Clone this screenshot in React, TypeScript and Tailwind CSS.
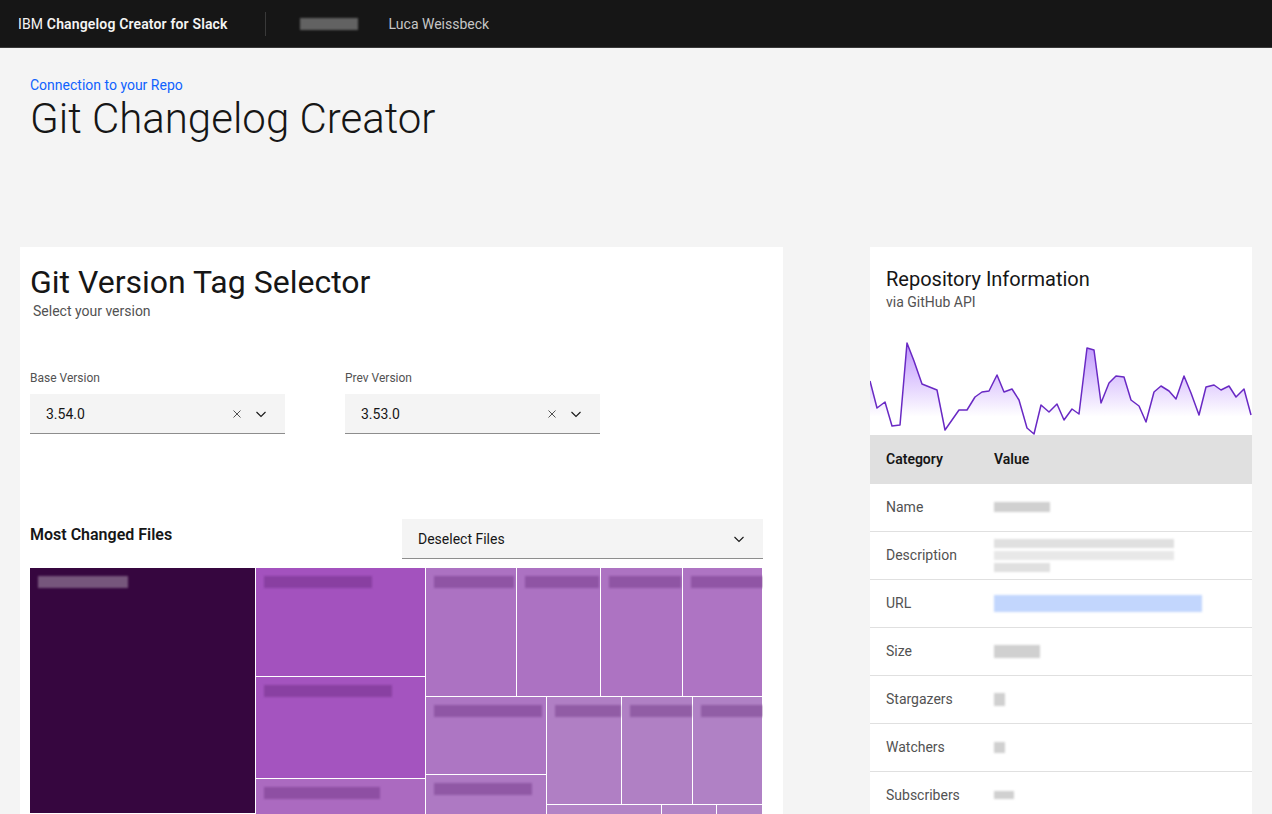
import React from "react";

const FONT = { fontFamily: "Roboto, 'Noto Sans', 'Liberation Sans', sans-serif" } as React.CSSProperties;

const pts: [number, number][] = [
  [870, 381], [877, 408], [885, 402], [892, 426], [900, 425], [907, 343], [914, 361], [922, 384], [937, 390], [945, 430],
  [959, 410], [967, 410], [975, 397], [982, 392], [989, 391], [997, 375], [1004, 392], [1012, 389], [1019, 400], [1027, 428],
  [1034, 434], [1041, 405], [1049, 412], [1057, 404], [1064, 420], [1072, 409], [1079, 414], [1087, 348], [1094, 350], [1101, 403],
  [1109, 383], [1116, 376], [1124, 377], [1131, 400], [1139, 406], [1146, 422], [1154, 392], [1161, 386], [1169, 391], [1176, 399],
  [1184, 376], [1191, 393], [1199, 415], [1206, 387], [1214, 385], [1221, 390], [1229, 386], [1236, 397], [1244, 389], [1251, 415],
];

function Sparkline() {
  const p = pts.map(([x, y]) => [x - 870, y - 335]);
  const line = p.map(([x, y], i) => `${i ? "L" : "M"}${x},${y}`).join(" ");
  const area = `${line} L381,100 L0,100 Z`;
  return (
    <svg width="382" height="100" viewBox="0 0 382 100" className="block">
      <defs>
        <linearGradient id="g" x1="0" y1="0" x2="0" y2="1">
          <stop offset="0" stopColor="#8a3ffc" stopOpacity="0.55" />
          <stop offset="0.8" stopColor="#8a3ffc" stopOpacity="0" />
        </linearGradient>
      </defs>
      <path d={area} fill="url(#g)" />
      <path d={line} fill="none" stroke="#6929c4" strokeWidth="1.5" strokeLinejoin="round" />
    </svg>
  );
}

function XIcon() {
  return (
    <svg width="16" height="16" viewBox="0 0 16 16" fill="none" stroke="#525252" strokeWidth="1">
      <path d="M4.5 4.5 L11.5 11.5 M11.5 4.5 L4.5 11.5" />
    </svg>
  );
}
function Chevron() {
  return (
    <svg width="16" height="16" viewBox="0 0 16 16" fill="none" stroke="#161616" strokeWidth="1.1">
      <path d="M3.5 6 L8 10.5 L12.5 6" />
    </svg>
  );
}

function Blur({ w, h = 12, c = "rgba(120,120,120,0.35)", className = "" }: { w: number; h?: number; c?: string; className?: string }) {
  return <div className={`blur-[1px] ${className}`} style={{ width: w, height: h, background: c }} />;
}

function VersionSelect({ label, value }: { label: string; value: string }) {
  return (
    <div className="w-[255px]">
      <div className="text-xs text-[#525252] leading-4 mb-2">{label}</div>
      <div className="h-10 bg-[#f4f4f4] border-b border-[#8d8d8d] flex items-center pl-4 pr-4">
        <span className="text-sm text-[#161616] flex-1">{value}</span>
        <div className="flex items-center gap-2">
          <XIcon />
          <Chevron />
        </div>
      </div>
    </div>
  );
}

type Cell = { x0: number; y0: number; x1: number; y1: number; c: string; lw: number; light?: boolean };
const cells: Cell[] = [
  { x0: 30, y0: 568, x1: 256, y1: 814, c: "#36063f", lw: 90, light: true },
  { x0: 256, y0: 568, x1: 426, y1: 677, c: "#a352be", lw: 108 },
  { x0: 256, y0: 677, x1: 426, y1: 779, c: "#a454bf", lw: 128 },
  { x0: 256, y0: 779, x1: 426, y1: 818, c: "#ab6ac0", lw: 116 },
  { x0: 426, y0: 568, x1: 517, y1: 697, c: "#ac72c2", lw: 80 },
  { x0: 517, y0: 568, x1: 601, y1: 697, c: "#ac72c2", lw: 74 },
  { x0: 601, y0: 568, x1: 683, y1: 697, c: "#ad73c2", lw: 72 },
  { x0: 683, y0: 568, x1: 763, y1: 697, c: "#ae74c3", lw: 72 },
  { x0: 426, y0: 697, x1: 547, y1: 775, c: "#ad76c3", lw: 108 },
  { x0: 426, y0: 775, x1: 547, y1: 818, c: "#ae79c3", lw: 98 },
  { x0: 547, y0: 697, x1: 622, y1: 805, c: "#b07fc4", lw: 66 },
  { x0: 622, y0: 697, x1: 693, y1: 805, c: "#b080c4", lw: 62 },
  { x0: 693, y0: 697, x1: 763, y1: 805, c: "#b081c5", lw: 62 },
  { x0: 547, y0: 805, x1: 662, y1: 818, c: "#b283c6", lw: 0 },
  { x0: 662, y0: 805, x1: 717, y1: 818, c: "#b284c6", lw: 0 },
  { x0: 717, y0: 805, x1: 763, y1: 818, c: "#b285c6", lw: 0 },
];

function Treemap() {
  return (
    <div className="relative h-[250px] bg-white overflow-hidden">
      {cells.map((c, i) => (
        <div
          key={i}
          className="absolute border-r border-b border-white"
          style={{ left: c.x0 - 30, top: c.y0 - 568, width: c.x1 - c.x0, height: c.y1 - c.y0, background: c.c }}
        >
          {c.lw > 0 && (
            <div className="mt-[8px] ml-[8px]">
              <Blur w={c.lw} h={12} c={c.light ? "rgba(255,255,255,0.32)" : "rgba(90,30,110,0.35)"} />
            </div>
          )}
        </div>
      ))}
    </div>
  );
}

const rows: { k: string; v: React.ReactNode }[] = [
  { k: "Name", v: <Blur w={56} h={10} /> },
  {
    k: "Description",
    v: (
      <div className="flex flex-col gap-[3px]">
        <Blur w={180} h={9} c="rgba(130,130,130,0.25)" />
        <Blur w={180} h={9} c="rgba(130,130,130,0.18)" />
        <Blur w={56} h={9} c="rgba(130,130,130,0.25)" />
      </div>
    ),
  },
  { k: "URL", v: <Blur w={208} h={17} c="rgba(120,165,250,0.45)" /> },
  { k: "Size", v: <Blur w={46} h={13} /> },
  { k: "Stargazers", v: <Blur w={11} h={13} /> },
  { k: "Watchers", v: <Blur w={11} h={11} /> },
  { k: "Subscribers", v: <Blur w={20} h={8} /> },
];

export default function App() {
  return (
    <div className="h-[814px] overflow-hidden bg-[#f4f4f4] text-[#161616]" style={FONT}>
      <header className="h-12 bg-[#161616] border-b border-[#393939] flex items-center">
        <div className="pl-[18px] pr-[37px] text-sm text-[#f4f4f4] tracking-[0.15px]">
          IBM <span className="font-semibold">Changelog Creator for Slack</span>
        </div>
        <div className="w-px h-6 bg-[#393939]" />
        <div className="ml-[34px]">
          <Blur w={58} h={12} c="rgba(150,150,150,0.6)" />
        </div>
        <div className="ml-[31px] text-sm text-[#c6c6c6]">Luca Weissbeck</div>
      </header>

      <div className="pl-[30px] pt-[28px]">
        <div className="text-sm text-[#0f62fe] leading-[18px]">Connection to your Repo</div>
        <h1 className="text-[42px] font-light leading-[50px] tracking-[0px]">Git Changelog Creator</h1>
      </div>

      <div className="flex justify-between px-5 mt-[103px]">
        <section className="w-[763px] bg-white pl-[10px] pr-5 pt-[15px] h-[600px]">
          <h2 className="text-[32px] leading-10 font-normal">Git Version Tag Selector</h2>
          <p className="text-sm text-[#525252] ml-[3px] leading-[18px]">Select your version</p>
          <div className="flex gap-[60px] mt-[50px]">
            <VersionSelect label="Base Version" value="3.54.0" />
            <VersionSelect label="Prev Version" value="3.53.0" />
          </div>
          <div className="flex items-center justify-between mt-[85px]">
            <div className="text-base font-semibold leading-5 -mt-2">Most Changed Files</div>
            <div className="w-[361px] h-10 bg-[#f4f4f4] border-b border-[#8d8d8d] flex items-center justify-between pl-4 pr-4">
              <span className="text-sm">Deselect Files</span>
              <Chevron />
            </div>
          </div>
          <div className="mt-[9px] w-[733px]">
            <Treemap />
          </div>
        </section>

        <section className="w-[382px] bg-white pt-[18px] h-[600px]">
          <div className="px-4">
            <h3 className="text-xl leading-7 font-normal">Repository Information</h3>
            <p className="text-sm text-[#525252] leading-[18px]">via GitHub API</p>
          </div>
          <div className="mt-[24px]">
            <Sparkline />
          </div>
          <table className="w-full text-sm border-collapse">
            <thead>
              <tr className="h-12 bg-[#e0e0e0]">
                <th className="text-left font-semibold pl-4 w-[124px]">Category</th>
                <th className="text-left font-semibold">Value</th>
              </tr>
            </thead>
            <tbody>
              {rows.map((r) => (
                <tr key={r.k} className="h-12 border-t border-[#e0e0e0]">
                  <td className="pl-4 text-[#525252]">{r.k}</td>
                  <td>{r.v}</td>
                </tr>
              ))}
            </tbody>
          </table>
        </section>
      </div>
    </div>
  );
}
